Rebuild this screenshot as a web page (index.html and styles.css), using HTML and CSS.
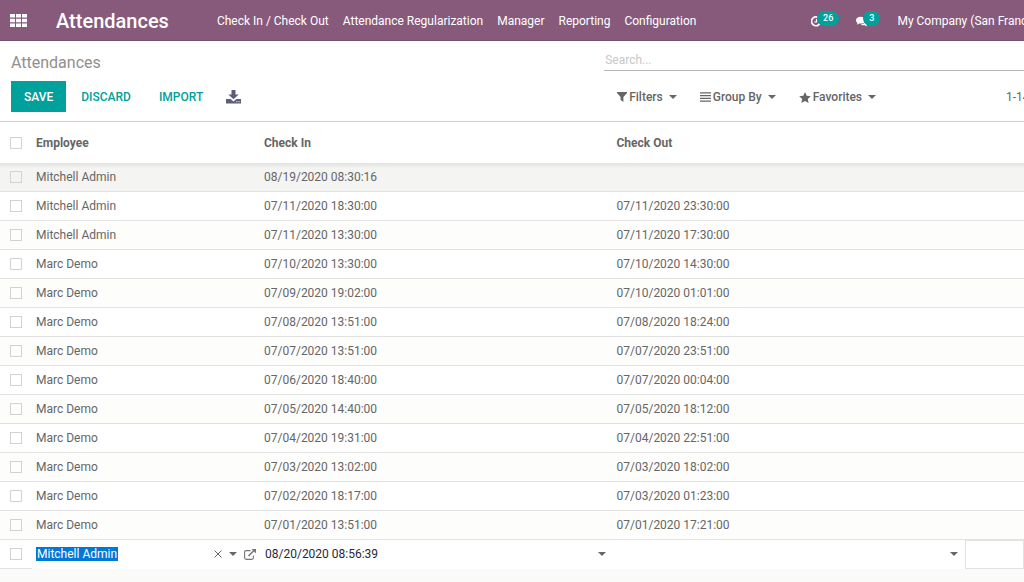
FILE: index.html
```html
<!DOCTYPE html>
<html lang="en">
<head>
  <meta charset="UTF-8">
  <title>Attendances</title>
  <link rel="stylesheet" href="styles.css">
</head>
<body>

  <header class="navbar">
    <button class="apps" aria-label="Apps">
      <svg width="17" height="13" viewBox="0 0 17 13" fill="currentColor">
        <path d="M0 0h5v3.6H0zM6 0h5v3.6H6zM12 0h5v3.6h-5zM0 4.7h5v3.6H0zM6 4.7h5v3.6H6zM12 4.7h5v3.6h-5zM0 9.4h5V13H0zM6 9.4h5V13H6zM12 9.4h5V13h-5z"/>
      </svg>
    </button>
    <a class="brand" href="#">Attendances</a>
    <nav class="menu">
      <a href="#">Check In / Check Out</a>
      <a href="#">Attendance Regularization</a>
      <a href="#">Manager</a>
      <a href="#">Reporting</a>
      <a href="#">Configuration</a>
    </nav>
    <div class="systray">
      <button class="tray-item" aria-label="Activities">
        <svg width="11" height="11" viewBox="1 0 11 11" fill="none" stroke="currentColor" stroke-width="1.7">
          <path d="M9 2.200A4.400 4.400 0 1 0 10.300 5.600"/>
          <path d="M6.500 3v3H4.200" stroke-width="1.200"/>
        </svg>
        <span class="badge">26</span>
      </button>
      <button class="tray-item" aria-label="Messages">
        <svg width="12" height="11" viewBox="0 0 12 11" fill="currentColor">
          <path d="M4.6.8C7.1.8 9.1 2.3 9.1 4.2S7.1 7.6 4.6 7.6c-.5 0-.9 0-1.3-.1C2.5 8.1 1.6 8.4.8 8.5c.4-.4.7-.9.8-1.5C.6 6.3 0 5.3 0 4.2 0 2.3 2.1.8 4.600.8z"/>
          <path d="M10 3.600c1.200.6 2 1.500 2 2.600 0 1-.6 1.900-1.500 2.500.1.600.4 1 .8 1.500-.9-.1-1.700-.5-2.500-1-1.500.3-3 0-4.100-.8C7.700 8.400 10.200 6.600 10 3.600z"/>
        </svg>
        <span class="badge">3</span>
      </button>
      <a class="company" href="#">My Company (San Francisco)</a>
    </div>
  </header>

  <section class="control-panel">
    <div class="panel-left">
      <h1>Attendances</h1>
      <div class="buttons">
        <button class="btn btn-primary">Save</button>
        <button class="btn">Discard</button>
        <button class="btn">Import</button>
        <button class="export" aria-label="Export">
          <svg width="15" height="14" viewBox="0 0 15 14" fill="currentColor">
            <path d="M5.500 0h4v4.500h3.200L7.500 9.300 2.300 4.500h3.200z"/>
            <path d="M0 9h4.600l2.900 2.500L10.400 9H15v4.500H0zM10.300 11.300v1h1v-1zM12.500 11.300v1h1v-1z" fill-rule="evenodd"/>
          </svg>
        </button>
      </div>
    </div>
    <div class="panel-right">
      <input class="search" type="text" placeholder="Search..." aria-label="Search">
      <div class="options">
        <button class="option">
          <svg width="10" height="10" viewBox="0 0 10 10" fill="currentColor"><path d="M0 0h10v1L6.400 5v5L3.600 8V5L0 1z"/></svg>
          Filters <span class="caret"></span>
        </button>
        <button class="option">
          <svg width="11" height="10" viewBox="0 0 11 10" fill="currentColor"><path d="M0 .3h11v1.300H0zM0 3h11v1.300H0zM0 5.700h11V7H0zM0 8.400h11v1.300H0z"/></svg>
          Group By <span class="caret"></span>
        </button>
        <button class="option">
          <svg width="12" height="11" viewBox="0 0 12 11" fill="currentColor"><path d="M6 0l1.700 3.700 4.100.5-3 2.700.8 4.100L6 9l-3.600 2 .8-4.100-3-2.700 4.100-.5z"/></svg>
          Favorites <span class="caret"></span>
        </button>
        <span class="pager">1-14</span>
      </div>
    </div>
  </section>

  <table class="list">
    <colgroup>
      <col class="col-check">
      <col class="col-employee">
      <col>
      <col>
      <col class="col-last">
    </colgroup>
    <thead>
      <tr>
        <th><input type="checkbox" aria-label="Select all"></th>
        <th>Employee</th>
        <th>Check In</th>
        <th>Check Out</th>
        <th></th>
      </tr>
    </thead>
    <tbody>
      <tr class="current"><td><input type="checkbox" aria-label="Select row"></td><td>Mitchell Admin</td><td>08/19/2020 08:30:16</td><td></td><td></td></tr>
      <tr><td><input type="checkbox" aria-label="Select row"></td><td>Mitchell Admin</td><td>07/11/2020 18:30:00</td><td>07/11/2020 23:30:00</td><td></td></tr>
      <tr><td><input type="checkbox" aria-label="Select row"></td><td>Mitchell Admin</td><td>07/11/2020 13:30:00</td><td>07/11/2020 17:30:00</td><td></td></tr>
      <tr><td><input type="checkbox" aria-label="Select row"></td><td>Marc Demo</td><td>07/10/2020 13:30:00</td><td>07/10/2020 14:30:00</td><td></td></tr>
      <tr><td><input type="checkbox" aria-label="Select row"></td><td>Marc Demo</td><td>07/09/2020 19:02:00</td><td>07/10/2020 01:01:00</td><td></td></tr>
      <tr><td><input type="checkbox" aria-label="Select row"></td><td>Marc Demo</td><td>07/08/2020 13:51:00</td><td>07/08/2020 18:24:00</td><td></td></tr>
      <tr><td><input type="checkbox" aria-label="Select row"></td><td>Marc Demo</td><td>07/07/2020 13:51:00</td><td>07/07/2020 23:51:00</td><td></td></tr>
      <tr><td><input type="checkbox" aria-label="Select row"></td><td>Marc Demo</td><td>07/06/2020 18:40:00</td><td>07/07/2020 00:04:00</td><td></td></tr>
      <tr><td><input type="checkbox" aria-label="Select row"></td><td>Marc Demo</td><td>07/05/2020 14:40:00</td><td>07/05/2020 18:12:00</td><td></td></tr>
      <tr><td><input type="checkbox" aria-label="Select row"></td><td>Marc Demo</td><td>07/04/2020 19:31:00</td><td>07/04/2020 22:51:00</td><td></td></tr>
      <tr><td><input type="checkbox" aria-label="Select row"></td><td>Marc Demo</td><td>07/03/2020 13:02:00</td><td>07/03/2020 18:02:00</td><td></td></tr>
      <tr><td><input type="checkbox" aria-label="Select row"></td><td>Marc Demo</td><td>07/02/2020 18:17:00</td><td>07/03/2020 01:23:00</td><td></td></tr>
      <tr><td><input type="checkbox" aria-label="Select row"></td><td>Marc Demo</td><td>07/01/2020 13:51:00</td><td>07/01/2020 17:21:00</td><td></td></tr>
      <tr class="editing">
        <td><input type="checkbox" aria-label="Select row"></td>
        <td>
          <div class="field">
            <input class="selected" type="text" value="Mitchell Admin" aria-label="Employee">
            <span class="field-tools">
              <button aria-label="Clear">
                <svg width="8" height="8" viewBox="0 0 8 8" stroke="currentColor"><path d="M.5.5l7 7M7.500.5l-7 7"/></svg>
              </button>
              <button aria-label="Open list"><span class="caret"></span></button>
              <button aria-label="External link">
                <svg class="external" width="12" height="11" viewBox="0 0 12 11" fill="none" stroke="currentColor" stroke-width="1.100">
                  <path d="M6.500 1.600H2.200Q.6 1.600.6 3.200v5.600q0 1.600 1.600 1.600h5.600q1.600 0 1.600-1.600V6.500"/>
                  <path d="M4.500 7L10 1.500" stroke-width="1.600"/>
                  <path d="M7.500 0H12v4.500z" fill="currentColor" stroke="none"/>
                </svg>
              </button>
            </span>
          </div>
        </td>
        <td>
          <div class="field date">
            <input type="text" value="08/20/2020 08:56:39" aria-label="Check In">
            <button aria-label="Pick check in"><span class="caret"></span></button>
          </div>
        </td>
        <td>
          <div class="field date">
            <input type="text" aria-label="Check Out">
            <button aria-label="Pick check out"><span class="caret"></span></button>
          </div>
        </td>
        <td class="boxed"></td>
      </tr>
    </tbody>
  </table>

</body>
</html>
```

FILE: styles.css
```css
* {
  box-sizing: border-box;
}

body {
  margin: 0;
  background: #fafaf9;
  color: #666;
  font-family: Roboto, sans-serif;
  font-size: 12px;
  line-height: 18px;
  overflow-x: hidden;
}

a {
  color: inherit;
  text-decoration: none;
}

button {
  padding: 0;
  border: 0;
  background: none;
  color: inherit;
  font: inherit;
  cursor: pointer;
}

svg {
  display: block;
}

.navbar {
  display: flex;
  align-items: center;
  height: 41px;
  padding: 2px 0 0 10px;
  background: #875a7b;
  border-bottom: 1px solid #74526c;
  color: #fff;
  white-space: nowrap;
  overflow: hidden;
}

.apps {
  padding-bottom: 2px;
}

.brand {
  margin-left: 29px;
  font-size: 20px;
  font-weight: 500;
}

.menu {
  display: flex;
  flex: 1;
  gap: 14px;
  margin-left: 48px;
}

.systray {
  display: flex;
  flex: none;
  align-items: center;
  width: 21%;
}

.tray-item {
  display: flex;
  align-items: center;
  margin-right: 17px;
}

.badge {
  margin: 0 0 6px -5px;
  padding: 0 6px;
  border-radius: 8px;
  background: #00a09d;
  font-size: 9px;
  font-weight: 500;
  line-height: 15px;
}

.control-panel {
  display: grid;
  grid-template-columns: 59fr 41fr;
  height: 81px;
  background: #fff;
  border-bottom: 1px solid #ccc;
}

.panel-left {
  padding: 10px 0 0 11px;
}

h1 {
  margin: 0;
  color: #8f8f8f;
  font-size: 16px;
  font-weight: 400;
  line-height: 24px;
}

.buttons {
  display: flex;
  align-items: center;
  margin-top: 6px;
}

.btn {
  height: 31px;
  padding: 0 13px;
  color: #00a09d;
  font-size: 12px;
  font-weight: 500;
  text-transform: uppercase;
}

.btn + .btn {
  margin-left: 2px;
}

.btn-primary {
  background: #00a09d;
  color: #fff;
}

.export {
  margin-left: 10px;
  color: #5f5e78;
}

.panel-right {
  min-width: 0;
  padding-top: 8px;
}

.search {
  display: block;
  width: 100%;
  height: 22px;
  padding: 0 1px;
  border: 0;
  border-bottom: 1px solid #b5b5b5;
  background: none;
  font: inherit;
}

.search::placeholder {
  color: #c8c8c8;
}

.options {
  display: flex;
  gap: 23px;
  margin: 17px 0 0 13px;
  white-space: nowrap;
}

.option {
  display: flex;
  align-items: center;
  gap: 2px;
  font-weight: 500;
}

.caret {
  border: 4px solid transparent;
  border-top-color: currentColor;
  border-bottom: 0;
}

.option .caret {
  margin-left: 4px;
}

.pager {
  width: 18px;
  margin-left: auto;
}

.list {
  width: 100%;
  border-collapse: separate;
  border-spacing: 0;
  table-layout: fixed;
}

.col-check {
  width: 32px;
}

.col-employee {
  width: 228px;
}

.col-last {
  width: 59px;
}

th {
  height: 41px;
  padding: 0 4px;
  background: #fff;
  font-weight: 700;
  text-align: left;
}

td {
  height: 29px;
  padding: 0 4px;
  border-bottom: 1px solid #e2e2e2;
  background: #fff;
}

th:first-child,
td:first-child {
  padding-left: 10px;
}

tr:nth-child(odd) td {
  background: #fdfdfc;
}

tbody tr.current td {
  background: linear-gradient(#e0e0e0, #f4f4f3 5px);
}

input[type=checkbox] {
  display: block;
  appearance: none;
  width: 12px;
  height: 12px;
  margin: 0;
  border: 1px solid #d3d3d3;
}

.field {
  display: flex;
  align-items: center;
  justify-content: space-between;
  color: #666;
}

.field input {
  width: 120px;
  padding: 0 1px;
  border: 0;
  background: none;
  color: #28283c;
  font: inherit;
}

.field .selected {
  width: 82px;
  height: 14px;
  background: #0078d7;
  color: #fff;
}

.field-tools {
  display: flex;
  align-items: center;
  gap: 7px;
}

.date {
  padding-right: 3px;
}

.field button {
  display: flex;
}

.external {
  color: #777;
}

.editing td:nth-child(n+2) {
  border-bottom-color: #fff;
}

.editing td.boxed {
  border: 1px solid #e2e2e2;
}
```
